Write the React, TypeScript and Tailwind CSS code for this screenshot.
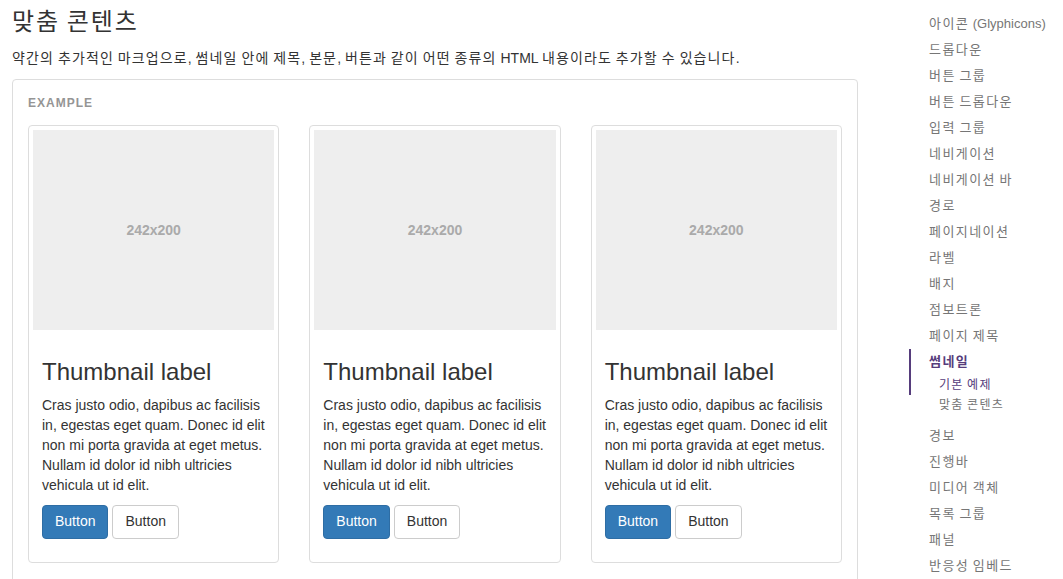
import React from 'react';

const FONT = "font-['Liberation_Sans','Noto_Sans_CJK_KR',sans-serif]";

// hangul runs get a bit of extra tracking to match the wider Korean face of the original
const Ko: React.FC<{ text: string; track: string }> = ({ text, track }) => (
  <>
    {text.split(/([가-힣]+)/).map((part, i) =>
      /[가-힣]/.test(part) ? (
        <span key={i} className={track}>
          {part}
        </span>
      ) : (
        <React.Fragment key={i}>{part}</React.Fragment>
      )
    )}
  </>
);

const navItems = [
  '아이콘 (Glyphicons)',
  '드롭다운',
  '버튼 그룹',
  '버튼 드롭다운',
  '입력 그룹',
  '네비게이션',
  '네비게이션 바',
  '경로',
  '페이지네이션',
  '라벨',
  '배지',
  '점보트론',
  '페이지 제목',
];

const navAfter = ['경보', '진행바', '미디어 객체', '목록 그룹', '패널', '반응성 임베드'];

const Thumbnail: React.FC = () => (
  <div className="border border-[#ddd] rounded-[4px] p-1 bg-white">
    <div className="h-[200px] bg-[#eee] flex items-center justify-center text-[14px] font-bold text-[#aaa]">
      242x200
    </div>
    <div className="p-[9px] text-[#333]">
      <h3 className="mt-5 mb-[9px] text-[24px] leading-[1.1]">Thumbnail label</h3>
      <p className="text-[14px] leading-5 mb-[10px]">
        Cras justo odio, dapibus ac facilisis in, egestas eget quam. Donec id elit non mi porta gravida at eget metus.
        Nullam id dolor id nibh ultricies vehicula ut id elit.
      </p>
      <div className="flex gap-1 mb-[10px]">
        <button className="h-[34px] px-3 text-[14px] rounded-[4px] bg-[#337ab7] border border-[#2e6da4] text-white">
          Button
        </button>
        <button className="h-[34px] px-3 text-[14px] rounded-[4px] bg-white border border-[#ccc] text-[#333]">
          Button
        </button>
      </div>
    </div>
  </div>
);

export default function App() {
  return (
    <div className={`${FONT} bg-white min-h-screen flex overflow-hidden`}>
      {/* Main content */}
      <div className="ml-3 w-[846px] shrink-0">
        <h3 className="mt-[9px] text-[24px] leading-[1.1] text-[#333]">
          <Ko text="맞춤 콘텐츠" track="tracking-[0.08em]" />
        </h3>
        <p className="mt-[13px] text-[14px] leading-5 text-[#333]">
          <Ko
            text="약간의 추가적인 마크업으로, 썸네일 안에 제목, 본문, 버튼과 같이 어떤 종류의 HTML 내용이라도 추가할 수 있습니다."
            track="tracking-[0.08em]"
          />
        </p>
        <div className="mt-[11px] border border-[#ddd] rounded-[4px] px-[15px] pt-[15px]">
          <div className="text-[12px] leading-[17px] font-bold tracking-[1px] text-[#959595]">EXAMPLE</div>
          <div className="mt-[13px] grid grid-cols-3 gap-[30px] pb-5">
            <Thumbnail />
            <Thumbnail />
            <Thumbnail />
          </div>
        </div>
      </div>

      {/* Sidebar */}
      <div className="ml-[51px] mt-[11px] whitespace-nowrap">
        <ul>
          {navItems.map((t) => (
            <li key={t}>
              <a className="block px-5 py-1 text-[13px] leading-[18px] text-[#767676]">
                <Ko text={t} track="tracking-[0.11em]" />
              </a>
            </li>
          ))}
          <li>
            <a className="block pl-[18px] pr-5 py-1 text-[13px] leading-[18px] font-bold text-[#563d7c] border-l-2 border-[#563d7c]">
              <Ko text="썸네일" track="tracking-[0.11em]" />
            </a>
            <ul className="mb-2">
              <li>
                <a className="block pl-[28px] pr-5 py-px text-[12px] leading-[18px] text-[#563d7c] border-l-2 border-[#563d7c]">
                  <Ko text="기본 예제" track="tracking-[0.11em]" />
                </a>
              </li>
              <li>
                <a className="block pl-[30px] pr-5 py-px text-[12px] leading-[18px] text-[#767676]">
                  <Ko text="맞춤 콘텐츠" track="tracking-[0.11em]" />
                </a>
              </li>
            </ul>
          </li>
          {navAfter.map((t) => (
            <li key={t}>
              <a className="block px-5 py-1 text-[13px] leading-[18px] text-[#767676]">
                <Ko text={t} track="tracking-[0.11em]" />
              </a>
            </li>
          ))}
        </ul>
      </div>
    </div>
  );
}
